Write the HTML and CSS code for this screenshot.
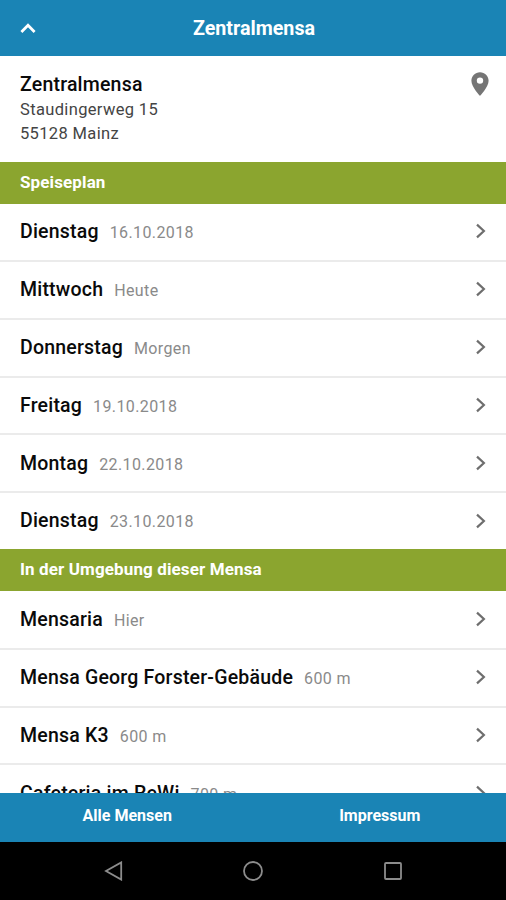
FILE: index.html
```html
<!DOCTYPE html>
<html lang="de">
<head>
  <meta charset="UTF-8">
  <meta name="viewport" content="width=device-width, initial-scale=1.0">
  <title>Zentralmensa</title>
  <link rel="stylesheet" href="styles.css">
</head>
<body>

  <!-- shared icons -->
  <svg class="sprite" width="0" height="0">
    <symbol id="chevron" viewBox="0 0 12 16">
      <path d="M2 1.6 L8.9 8 L2 14.4" fill="none" stroke="#6e6e6e" stroke-width="2.2"/>
    </symbol>
  </svg>

  <div class="app">
    <header class="header">
      <button class="back" aria-label="Zurück">
        <svg width="16" height="11" viewBox="0 0 16 11"><path d="M1.4 9.9 L8 3.3 L14.6 9.9" fill="none" stroke="#fff" stroke-width="2.8"/></svg>
      </button>
      <h1>Zentralmensa</h1>
    </header>

    <main class="content">
      <div class="address">
        <div>
          <div class="name">Zentralmensa</div>
          <div class="line">Staudingerweg 15</div>
          <div class="line">55128 Mainz</div>
        </div>
        <svg class="pin" width="18" height="25" viewBox="0 0 18 25"><path fill="#757575" fill-rule="evenodd" d="M9 0.2C4.2 0.2 0.4 4 0.4 8.700c0 6.400 8.600 15.200 8.600 15.200S17.600 15.100 17.600 8.700C17.600 4 13.800 0.200 9 0.200zM9 5.400a3.200 3.200 0 1 1 0 6.400a3.200 3.200 0 0 1 0-6.400z"/></svg>
      </div>

      <h2 class="section">Speiseplan</h2>
      <ul class="list">
        <li><span class="name">Dienstag</span><span class="note">16.10.2018</span><svg class="chevron"><use href="#chevron"/></svg></li>
        <li><span class="name">Mittwoch</span><span class="note">Heute</span><svg class="chevron"><use href="#chevron"/></svg></li>
        <li><span class="name">Donnerstag</span><span class="note">Morgen</span><svg class="chevron"><use href="#chevron"/></svg></li>
        <li><span class="name">Freitag</span><span class="note">19.10.2018</span><svg class="chevron"><use href="#chevron"/></svg></li>
        <li><span class="name">Montag</span><span class="note">22.10.2018</span><svg class="chevron"><use href="#chevron"/></svg></li>
        <li><span class="name">Dienstag</span><span class="note">23.10.2018</span><svg class="chevron"><use href="#chevron"/></svg></li>
      </ul>

      <h2 class="section nearby">In der Umgebung dieser Mensa</h2>
      <ul class="list">
        <li><span class="name">Mensaria</span><span class="note">Hier</span><svg class="chevron"><use href="#chevron"/></svg></li>
        <li><span class="name">Mensa Georg Forster-Gebäude</span><span class="note">600 m</span><svg class="chevron"><use href="#chevron"/></svg></li>
        <li><span class="name">Mensa K3</span><span class="note">600 m</span><svg class="chevron"><use href="#chevron"/></svg></li>
        <li><span class="name">Cafeteria im ReWi</span><span class="note">700 m</span><svg class="chevron"><use href="#chevron"/></svg></li>
      </ul>
    </main>

    <nav class="tabs">
      <a>Alle Mensen</a>
      <a>Impressum</a>
    </nav>

    <div class="android-nav">
      <svg width="20" height="20" viewBox="0 0 20 20"><path d="M17.200 1.400 V18.600 L2 10 Z"/></svg>
      <svg width="20" height="20" viewBox="0 0 20 20"><circle cx="10" cy="10" r="9"/></svg>
      <svg width="20" height="20" viewBox="0 0 20 20"><rect x="2" y="2" width="16" height="16" rx="1"/></svg>
    </div>
  </div>

</body>
</html>
```
FILE: styles.css
```css
html, body {
  height: 100%;
  margin: 0;
  overflow: hidden;
}

body {
  font-family: Roboto, "Liberation Sans", sans-serif;
  color: #0a0a0a;
  background: #fff;
}

.sprite {
  display: block;
}

.app {
  display: flex;
  flex-direction: column;
  height: 100%;
}

.header {
  display: grid;
  grid-template-columns: 56px 1fr 54px;
  align-items: center;
  height: 55.5px;
  flex-shrink: 0;
  background: #1a84b5;
  color: #fff;
}

.header h1 {
  margin: 0;
  padding-top: 2px;
  font-size: 19.7px;
  font-weight: 700;
  line-height: 24px;
  text-align: center;
}

.back {
  display: flex;
  justify-content: center;
  padding: 0;
  border: none;
  background: none;
}

.content {
  flex: 1;
  min-height: 0;
  overflow: hidden;
}

.address {
  display: flex;
  justify-content: space-between;
  box-sizing: border-box;
  height: 106.5px;
  padding: 16px 17px 0 20px;
}

.name {
  font-size: 19.5px;
  font-weight: 500;
  line-height: 26px;
  letter-spacing: 0.2px;
}

.line {
  font-size: 16.5px;
  line-height: 24.5px;
  letter-spacing: 0.35px;
  color: #444;
}

.section {
  margin: 0;
  height: 41.5px;
  padding-left: 20px;
  background: #8ba52f;
  color: #fff;
  font-size: 17px;
  font-weight: 700;
  line-height: 40px;
  letter-spacing: 0.12px;
}

.section.nearby {
  height: 42.3px;
}

.list {
  list-style: none;
  margin: 0;
  padding: 0;
}

.list li {
  display: flex;
  align-items: baseline;
  box-sizing: border-box;
  height: 57.8px;
  padding: 15.2px 19px 0 20px;
  border-top: 2px solid #ebebeb;
}

.list li:first-child {
  height: 56.5px;
  padding-top: 15.7px;
  border-top: none;
}

.note {
  margin-left: 11px;
  font-size: 16px;
  font-weight: 400;
  letter-spacing: 0.38px;
  color: #8a8a8a;
}

.chevron {
  width: 12px;
  height: 16px;
  margin: 4.2px 0 0 auto;
  align-self: flex-start;
}

.tabs {
  display: flex;
  height: 49px;
  padding-left: 1px;
  flex-shrink: 0;
  background: #1a84b5;
}

.tabs a {
  flex: 1;
  color: #fff;
  font-size: 16px;
  font-weight: 700;
  line-height: 46px;
  text-align: center;
}

.android-nav {
  display: flex;
  justify-content: center;
  align-items: center;
  gap: 119.5px;
  height: 58px;
  flex-shrink: 0;
  background: #000;
}

.android-nav svg {
  fill: none;
  stroke: #8c8c8c;
  stroke-width: 1.8;
}
```
